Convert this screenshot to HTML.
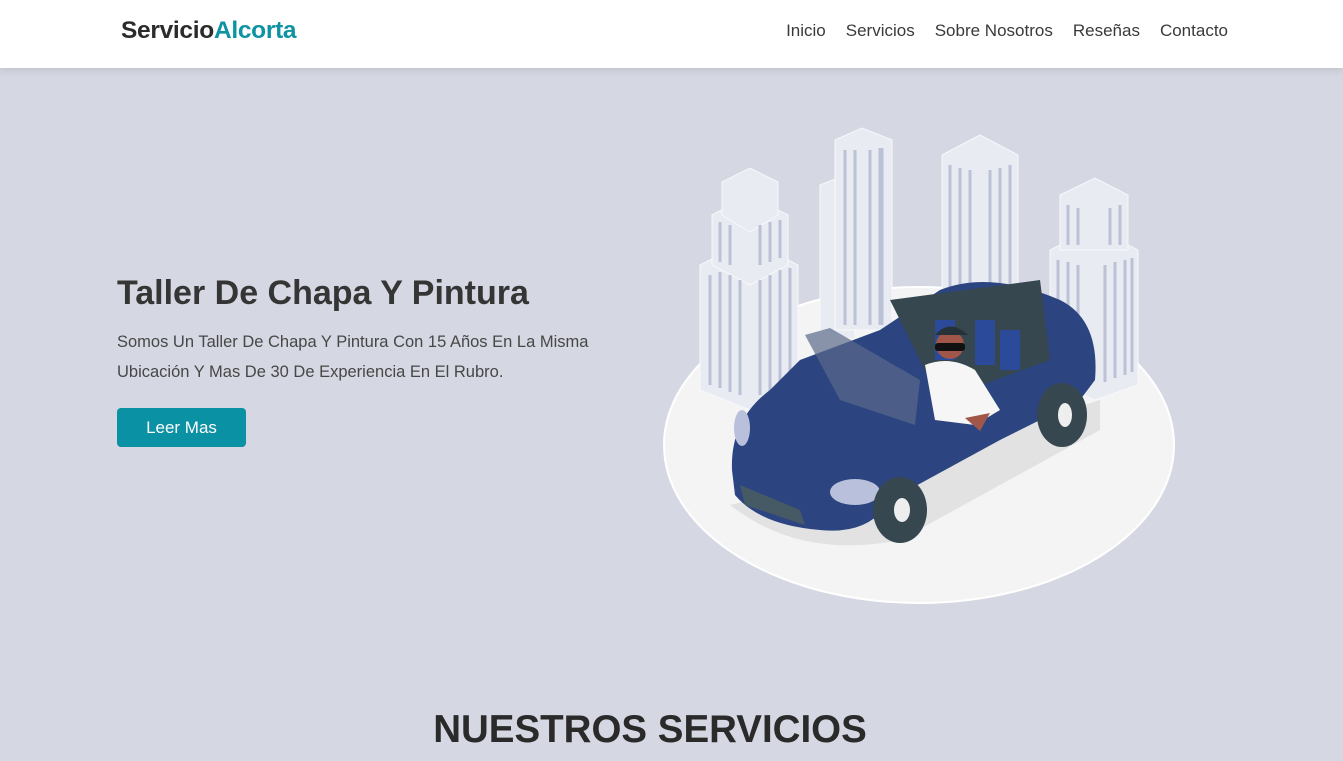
<!DOCTYPE html>
<html><head><meta charset="utf-8"><style>
*{margin:0;padding:0;box-sizing:border-box}
body{width:1343px;height:761px;overflow:hidden;background:#d5d8e2;font-family:"Liberation Sans",sans-serif;color:#333;position:relative}
nav{position:absolute;left:0;top:0;width:1343px;height:68px;background:#fff;box-shadow:0 2px 8px rgba(0,0,0,.12)}
.logo{position:absolute;left:121px;top:17px;font-size:24.5px;font-weight:bold;color:#2b2b2b;letter-spacing:-.3px}
.logo span{color:#0d93a3}
.links{position:absolute;right:115px;top:21px;font-size:17px;color:#3a3a3a}
.links a{margin-left:20px}
h1{position:absolute;left:117px;top:274px;font-size:34px;font-weight:bold;color:#353535}
p{position:absolute;left:117px;top:327px;width:500px;font-size:16.5px;line-height:30px;color:#474747}
.btn{position:absolute;left:117px;top:408px;width:129px;height:39px;background:#0a91a3;border-radius:4px;color:#fff;font-size:17px;text-align:center;line-height:39px}
h2{position:absolute;left:0;width:1300px;text-align:center;top:708px;font-size:38.5px;font-weight:bold;color:#2a2a2a}
svg{position:absolute;left:0;top:0}
</style></head><body>
<nav><div class="logo">Servicio<span>Alcorta</span></div>
<div class="links"><a>Inicio</a><a>Servicios</a><a>Sobre Nosotros</a><a>Reseñas</a><a>Contacto</a></div></nav>
<svg width="1343" height="761">
<ellipse cx="919" cy="445" rx="255" ry="158" fill="#f4f4f5" stroke="#fff" stroke-width="2"/>
<g fill="#e9ebf2" stroke="#f7f8fb">
<polygon points="700,265 750,240 798,265 798,390 750,410 700,390"/>
<polygon points="712,215 750,195 788,215 788,265 750,285 712,265"/>
<polygon points="722,182 750,168 778,182 778,215 750,232 722,215"/>
<polygon points="820,185 838,178 855,185 855,340 820,330"/>
<polygon points="835,140 862,128 892,140 892,330 835,330"/>
<polygon points="942,155 980,135 1018,155 1018,300 942,300"/>
<polygon points="1050,250 1095,228 1138,250 1138,385 1095,400 1050,380"/>
<polygon points="1060,195 1095,178 1128,195 1128,250 1060,250"/>
</g>
<g stroke="#bcc2d6" stroke-width="3">
<path d="M710 275V385M720 272V388M730 275V392M740 280V395M760 280V395M770 275V392M780 270V388M790 268V385"/>
<path d="M720 222V262M730 225V265M760 225V265M770 222V262M780 220V258"/>
<path d="M845 150V325M855 150V325M870 150V325M880 148V325M882 148V325"/>
<path d="M950 165V295M960 168V295M970 170V295M990 170V295M1000 168V295M1010 165V295"/>
<path d="M1058 260V375M1068 262V378M1078 265V382M1105 265V382M1115 262V378M1125 260V375M1132 258V372"/>
<path d="M1068 205V245M1078 208V245M1110 208V245M1120 205V245"/>
</g>
<path d="M730 505 Q800 560 900 540 L1100 430 L1100 400 L880 470 Z" fill="#e2e2e3"/>
<path d="M732 470 Q730 420 770 390 L800 360 L880 330 L940 290 Q990 270 1060 300 Q1100 320 1095 380 L1080 400 Q1040 420 1000 440 L890 500 Q870 535 820 530 Q760 525 735 495 Z" fill="#2c4480"/>
<path d="M890 300 L1040 280 L1050 360 L940 400 Z" fill="#37474f"/>
<path d="M935 320 h20 v40 h-20z M975 320 h20 v45 h-20z M1000 330 h20 v40 h-20z" fill="#2c4a9a"/>
<path d="M805 335 L830 328 L920 380 L915 425 L840 400 Z" fill="#5a6a8a" opacity=".7"/>
<path d="M925 365 Q950 355 975 370 L1000 410 L975 425 L935 420 Z" fill="#f6f6f6"/>
<circle cx="950" cy="345" r="14" fill="#a0574a"/><path d="M935 335 Q950 318 968 335 Z" fill="#263238"/>
<rect x="935" y="343" width="30" height="8" rx="3" fill="#111"/>
<path d="M965 418 l25 -5 l-10 18 z" fill="#a0574a"/>
<ellipse cx="855" cy="492" rx="25" ry="13" fill="#b8c0dc"/>
<ellipse cx="742" cy="428" rx="8" ry="18" fill="#b8c0dc"/>
<ellipse cx="900" cy="510" rx="27" ry="33" fill="#37474f"/><ellipse cx="902" cy="510" rx="8" ry="12" fill="#eee"/>
<ellipse cx="1062" cy="415" rx="25" ry="32" fill="#37474f"/><ellipse cx="1065" cy="415" rx="7" ry="12" fill="#eee"/>
<path d="M740 485 L800 510 L805 525 L745 505 Z" fill="#455a64"/>
</svg>
<h1>Taller De Chapa Y Pintura</h1>
<p>Somos Un Taller De Chapa Y Pintura Con 15 Años En La Misma Ubicación Y Mas De 30 De Experiencia En El Rubro.</p>
<div class="btn">Leer Mas</div>
<h2>NUESTROS SERVICIOS</h2>
</body></html>
